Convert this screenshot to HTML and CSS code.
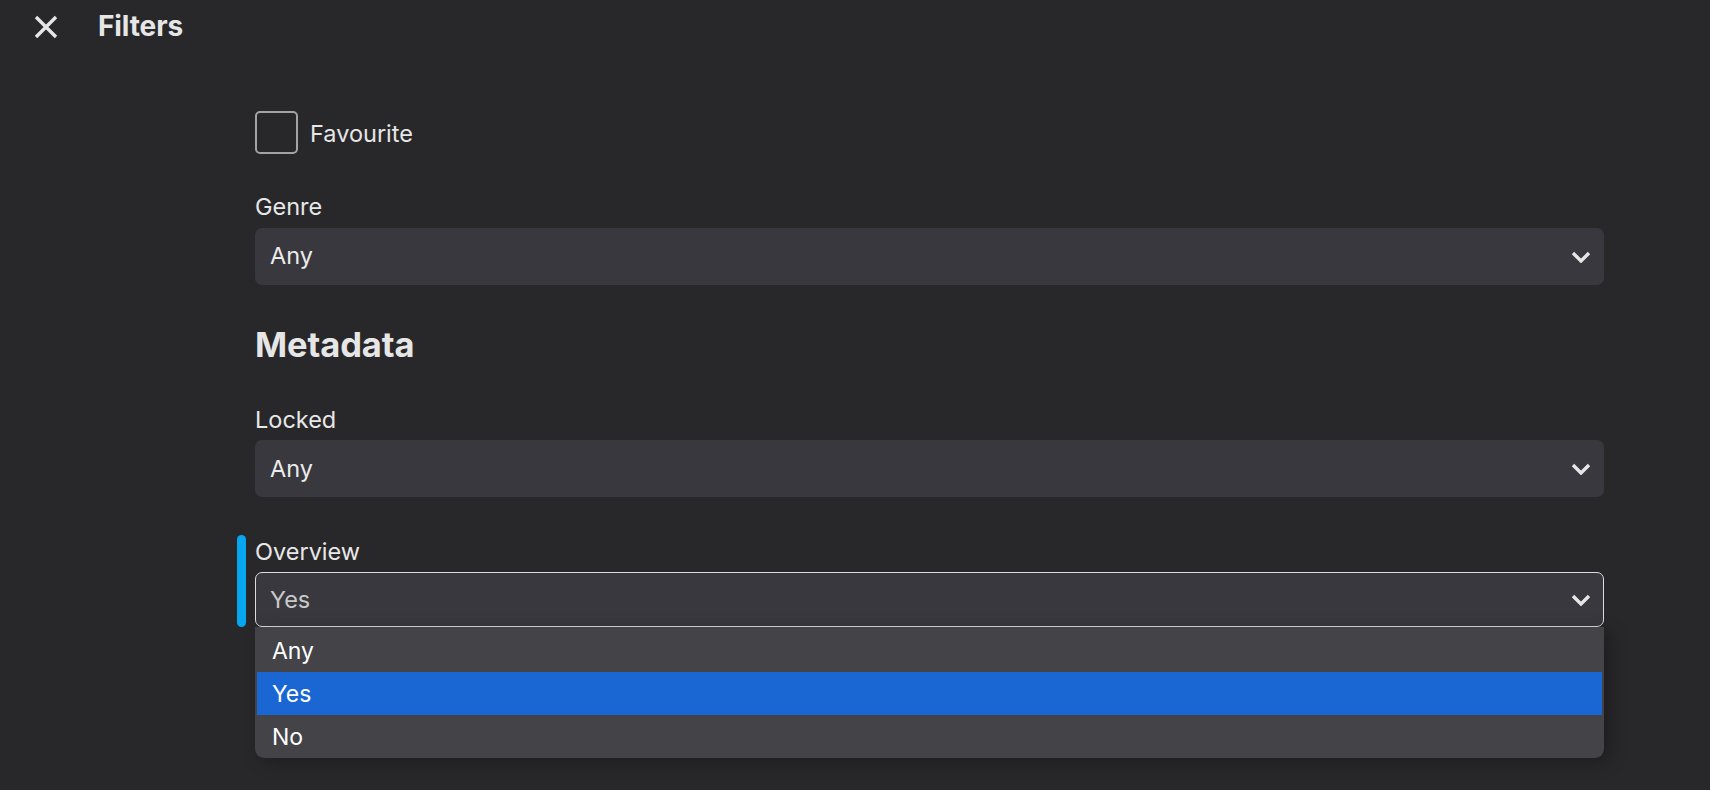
FILE: index.html
```html
<!DOCTYPE html>
<html lang="en">
<head>
<meta charset="utf-8">
<title>Filters</title>
<link rel="stylesheet" href="styles.css">
</head>
<body>
<header class="topbar">
  <button class="close-btn" aria-label="Close">
    <svg width="24" height="24" viewBox="0 0 24 24"><path d="M2 2 L22 22 M22 2 L2 22" stroke="#e6e6e6" stroke-width="3.4" stroke-linecap="butt" fill="none"/></svg>
  </button>
  <h1 class="title">Filters</h1>
</header>

<main class="content">
  <label class="check-row">
    <span class="checkbox"></span>
    <span class="check-label">Favourite</span>
  </label>

  <div class="field field-genre">
    <div class="field-label">Genre</div>
    <div class="select">
      <span class="select-value">Any</span>
      <svg class="chevron" width="20" height="12" viewBox="0 0 20 12"><path d="M2 2 L10 10 L18 2" stroke="#e6e6e6" stroke-width="3.4" fill="none" stroke-linejoin="miter"/></svg>
    </div>
  </div>

  <h2 class="section-title">Metadata</h2>

  <div class="field field-locked">
    <div class="field-label">Locked</div>
    <div class="select">
      <span class="select-value">Any</span>
      <svg class="chevron" width="20" height="12" viewBox="0 0 20 12"><path d="M2 2 L10 10 L18 2" stroke="#e6e6e6" stroke-width="3.4" fill="none"/></svg>
    </div>
  </div>

  <div class="field field-overview focused">
    <span class="focus-bar"></span>
    <div class="field-label">Overview</div>
    <div class="select open">
      <span class="select-value dim">Yes</span>
      <svg class="chevron" width="20" height="12" viewBox="0 0 20 12"><path d="M2 2 L10 10 L18 2" stroke="#e6e6e6" stroke-width="3.4" fill="none"/></svg>
    </div>
    <ul class="dropdown">
      <li class="option">Any</li>
      <li class="option selected">Yes</li>
      <li class="option">No</li>
    </ul>
  </div>
</main>
</body>
</html>
```

FILE: styles.css
```css
* { box-sizing: border-box; }

html, body {
  margin: 0;
  padding: 0;
  background: #28282b;
  color: #e8e8e8;
  font-family: Inter, "Noto Sans", "Liberation Sans", sans-serif;
  height: 100%;
  overflow: hidden;
}

.topbar {
  height: 52px;
  display: flex;
  align-items: center;
  padding-left: 34px;
}

.close-btn {
  background: none;
  border: 0;
  padding: 0;
  width: 24px;
  height: 24px;
  display: flex;
  align-items: center;
  justify-content: center;
  margin-top: 1px;
}

.title {
  margin: 0 0 0 40px;
  font-size: 28px;
  font-weight: 700;
  line-height: 34px;
  color: #e6e6e6;
  letter-spacing: -0.1px;
}

.content {
  margin-left: 255px;
  width: 1349px;
  display: flex;
  flex-direction: column;
}

.check-row {
  margin-top: 59px;
  display: flex;
  align-items: center;
  gap: 12px;
  height: 43px;
}

.checkbox {
  width: 43px;
  height: 43px;
  border: 2.5px solid #a3a3a3;
  border-radius: 5px;
  flex: none;
}

.check-label {
  font-size: 23.5px;
  line-height: 30px;
  color: #e6e6e6;
  padding-top: 3px;
}

.field {
  position: relative;
  display: flex;
  flex-direction: column;
}

.field-genre { margin-top: 38px; }
.field-locked { margin-top: 39px; }
.field-overview { margin-top: 39.5px; }

.field-label {
  font-size: 23.5px;
  line-height: 30.5px;
  color: #e8e8e8;
  margin-bottom: 5px;
}

.select {
  height: 57px;
  background: #39383e;
  border-radius: 7px;
  display: flex;
  align-items: center;
  justify-content: space-between;
  padding: 0 13px 0 15px;
}

.select.open {
  height: 55px;
  border: 1.3px solid #dcdcdc;
  padding-left: 14px;
  padding-right: 12px;
}

.select-value {
  font-size: 23.5px;
  line-height: 30px;
  color: #ececec;
}

.select-value.dim { color: #c9c9c9; }

.chevron { flex: none; margin-top: 1px; }

.section-title {
  margin: 39px 0 0 0;
  font-size: 34.5px;
  line-height: 42px;
  font-weight: 700;
  color: #e6e6e6;
  letter-spacing: -0.1px;
}

.focus-bar {
  position: absolute;
  left: -18px;
  top: -2px;
  bottom: 0;
  width: 9px;
  border-radius: 5px;
  background: #07a6f0;
}

.dropdown {
  position: absolute;
  top: 100%;
  left: 0;
  right: 0;
  margin: 0;
  padding: 2px 2px 0 2px;
  list-style: none;
  background: #444348;
  border-radius: 0 0 9px 9px;
  box-shadow: 6px 4px 18px rgba(0, 0, 0, 0.28);
  overflow: hidden;
}

.option {
  height: 43px;
  display: flex;
  align-items: center;
  padding-left: 15px;
  font-size: 23px;
  color: #ffffff;
}

.option.selected { background: #1a66d3; }
```
